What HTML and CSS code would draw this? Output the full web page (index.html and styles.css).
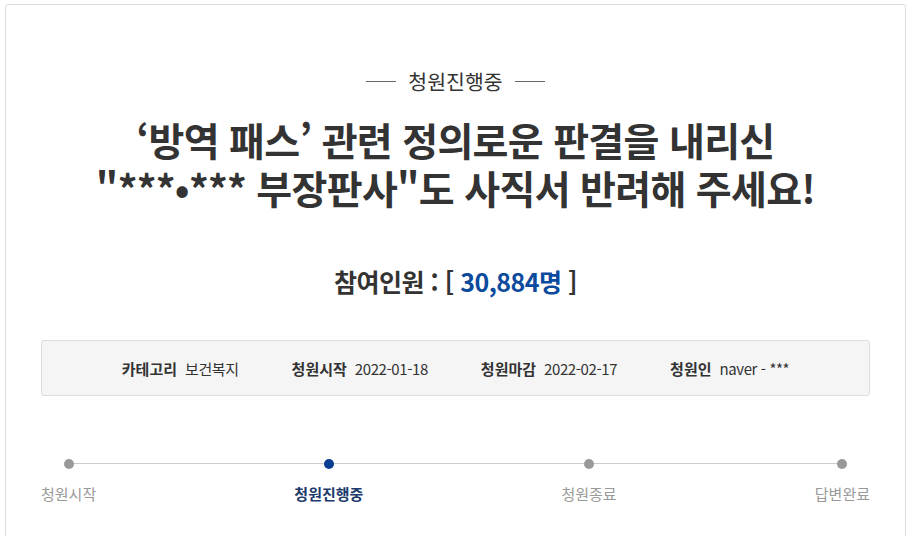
FILE: index.html
```html
<!DOCTYPE html>
<html lang="ko">
<head>
    <meta charset="UTF-8">
    <meta name="viewport" content="width=device-width, initial-scale=1.0">
    <title>청원 상세</title>
    <link rel="stylesheet" href="styles.css">
</head>
<body>
<div class="petition">

    <div class="status">
        <span class="status-line"></span>
        <span class="status-text">청원진행중</span>
        <span class="status-line"></span>
    </div>

    <h1 class="title">‘방역 패스’ 관련 정의로운 판결을 내리신<br>"***•*** 부장판사"도 사직서 반려해 주세요!</h1>

    <div class="count">참여인원 : [ <span class="count-num">30,884명</span> ]</div>

    <div class="info">
        <div class="info-item"><b>카테고리</b><span>보건복지</span></div>
        <div class="info-item"><b>청원시작</b><span>2022-01-18</span></div>
        <div class="info-item"><b>청원마감</b><span>2022-02-17</span></div>
        <div class="info-item"><b>청원인</b><span>naver - ***</span></div>
    </div>

    <div class="steps">
        <div class="steps-line"></div>
        <div class="step"><i class="dot"></i><span>청원시작</span></div>
        <div class="step active"><i class="dot"></i><span>청원진행중</span></div>
        <div class="step"><i class="dot"></i><span>청원종료</span></div>
        <div class="step"><i class="dot"></i><span>답변완료</span></div>
    </div>

</div>
</body>
</html>
```

FILE: styles.css
```css
body {
    margin: 0;
    font-family: "Noto Sans CJK KR", "Noto Sans", sans-serif;
    color: #333;
    background: #fff;
}
.petition {
    margin: 4px 1px 0 5px;
    height: 600px;
    border: 1px solid #ddd;
    border-radius: 3px;
    padding: 0 35px;
}
.status {
    display: flex;
    justify-content: center;
    align-items: center;
    gap: 12px;
    margin-top: 61px;
    height: 30px;
}
.status-line {
    width: 30px;
    height: 1px;
    background: #666;
}
.status-text {
    font-size: 20.5px;
    color: #333;
}
.title {
    margin: 19px 0 0;
    text-align: center;
    font-size: 39px;
    line-height: 48px;
    font-weight: bold;
    letter-spacing: -0.7px;
    color: #333;
}
.count {
    margin-top: 52px;
    text-align: center;
    font-size: 25px;
    font-weight: bold;
    letter-spacing: -0.5px;
    color: #333;
}
.count-num {
    color: #0b4a9c;
}
.info {
    margin-top: 41px;
    height: 54px;
    display: flex;
    justify-content: center;
    align-items: center;
    gap: 53px;
    background: #f5f5f5;
    border: 1px solid #ddd;
    border-radius: 3px;
    font-size: 15px;
    letter-spacing: -0.4px;
    color: #333;
}
.info-item b {
    margin-right: 8px;
    letter-spacing: 0;
}
.steps {
    position: relative;
    margin-top: 63px;
    display: flex;
    justify-content: space-between;
}
.steps-line {
    position: absolute;
    left: 26px;
    right: 26px;
    top: 4px;
    height: 1px;
    background: #ccc;
}
.step {
    position: relative;
    display: flex;
    flex-direction: column;
    align-items: center;
    gap: 14px;
    font-size: 15px;
    color: #999;
}
.dot {
    width: 10px;
    height: 10px;
    border-radius: 50%;
    background: #999;
}
.step.active {
    color: #1c3a6b;
    font-weight: bold;
}
.step.active .dot {
    background: #0b3d91;
}
```
